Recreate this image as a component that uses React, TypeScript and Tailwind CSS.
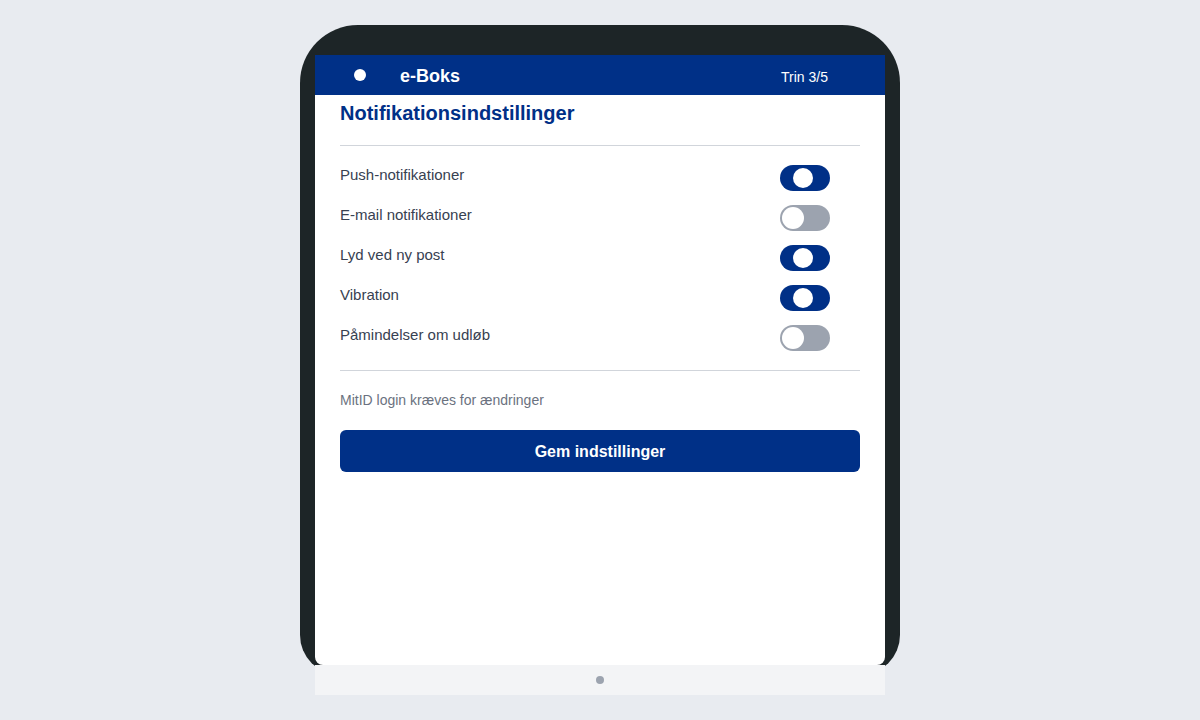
import React, { useState } from 'react';

type Setting = { id: string; label: string; on: boolean };

const initial: Setting[] = [
  { id: 'push', label: 'Push-notifikationer', on: true },
  { id: 'email', label: 'E-mail notifikationer', on: false },
  { id: 'sound', label: 'Lyd ved ny post', on: true },
  { id: 'vibration', label: 'Vibration', on: true },
  { id: 'expiry', label: 'Påmindelser om udløb', on: false },
];

function Toggle({ on, onClick }: { on: boolean; onClick: () => void }) {
  return (
    <button
      type="button"
      onClick={onClick}
      className={
        on
          ? 'w-[50px] h-[26px] rounded-full bg-[#003087] flex items-center shrink-0'
          : 'w-[50px] h-[26px] rounded-full bg-[#9ca3af] flex items-center shrink-0'
      }
    >
      {on ? (
        <span className="block w-5 h-5 rounded-full bg-white ml-[13px]" />
      ) : (
        <span className="block w-[22px] h-[22px] rounded-full bg-white ml-[2px]" />
      )}
    </button>
  );
}

export default function App() {
  const [settings, setSettings] = useState(initial);

  const toggle = (id: string) =>
    setSettings(s => s.map(x => (x.id === id ? { ...x, on: !x.on } : x)));

  return (
    <div
      className="w-[1200px] h-[720px] bg-[#e8ebf0] flex justify-center pt-[25px] overflow-hidden"
      style={{ fontFamily: '"Liberation Sans", Arial, sans-serif' }}
    >
      <div className="w-[600px] h-[650px] bg-[#1d2527] rounded-t-[58px] rounded-b-[40px] pt-[30px] px-[15px]">
        <div className="h-[640px] flex flex-col">
          <div className="h-10 bg-[#003087] flex items-center pl-[39px] pr-[57px] shrink-0">
            <span className="w-3 h-3 rounded-full bg-white" />
            <span className="ml-[34px] mt-[2px] text-white font-bold text-[18px]">e-Boks</span>
            <span className="ml-auto mt-[4px] text-white text-sm">Trin 3/5</span>
          </div>

          <div className="flex-1 bg-white rounded-b-lg px-[25px] pt-1">
            <h2 className="text-[20px] leading-7 font-bold text-[#003087]">Notifikationsindstillinger</h2>
            <div className="mt-[18px] h-px bg-[#d1d5db]" />

            <div className="mt-[19px] flex flex-col gap-[14px]">
              {settings.map(s => (
                <div key={s.id} className="flex justify-between items-start pr-[30px]">
                  <span className="text-[15px] leading-5 text-[#374151]">{s.label}</span>
                  <Toggle on={s.on} onClick={() => toggle(s.id)} />
                </div>
              ))}
            </div>

            <div className="mt-[19px] h-px bg-[#d1d5db]" />
            <p className="mt-[19px] text-sm leading-5 text-[#6b7280]">MitID login kræves for ændringer</p>

            <button
              type="button"
              className="mt-5 w-full h-[42px] pt-[2px] rounded-md bg-[#003087] text-white font-bold text-base"
            >
              Gem indstillinger
            </button>
          </div>

          <div className="h-[30px] bg-[#f3f4f6] flex items-center justify-center shrink-0">
            <span className="w-2 h-2 rounded-full bg-[#9ca3af]" />
          </div>
        </div>
      </div>
    </div>
  );
}
